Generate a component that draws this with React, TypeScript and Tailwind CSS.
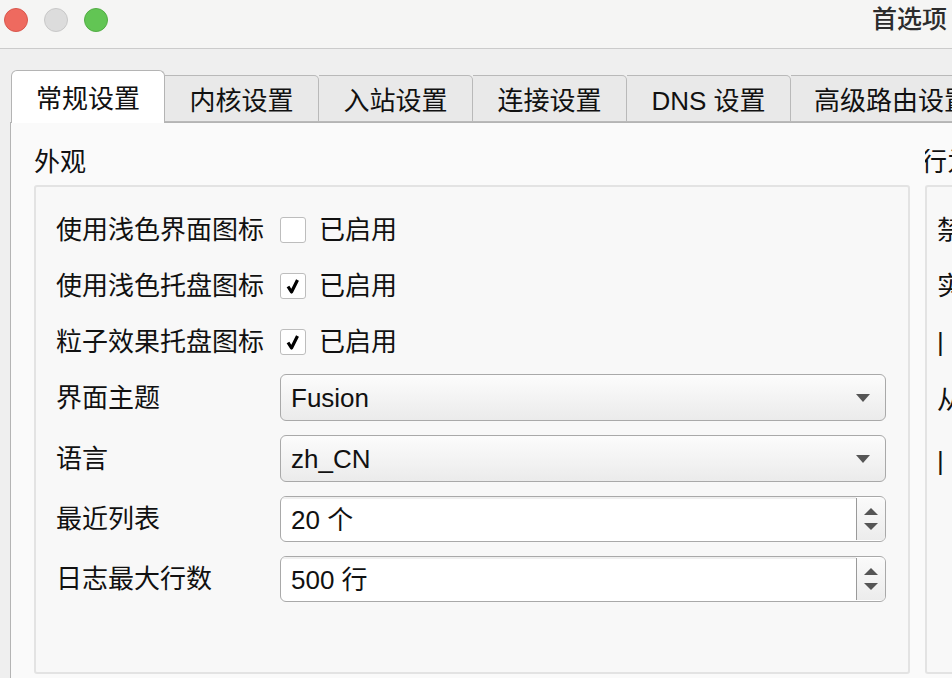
import React from "react";

const FONT = '"Liberation Sans", "Noto Sans CJK SC", sans-serif';

const tabs = ["常规设置", "内核设置", "入站设置", "连接设置", "DNS 设置", "高级路由设置"];

function Checkbox({ checked }: { checked: boolean }) {
  return (
    <div className="w-[26px] h-[26px] border border-[#bdbdbd] rounded-[3px] bg-white flex items-center justify-center">
      {checked && (
        <svg width="18" height="18" viewBox="0 0 18 18">
          <path d="M4 9.5 L7.5 15 L13.5 3" fill="none" stroke="#000" strokeWidth="3.2" strokeLinejoin="round" />
        </svg>
      )}
    </div>
  );
}

function Combo({ value }: { value: string }) {
  return (
    <div className="h-[47px] flex-1 flex items-center justify-between pl-[10px] pr-[14px] rounded-[6px] border border-[#a9a9a9] bg-gradient-to-b from-[#fcfcfc] to-[#ebebeb]">
      <span>{value}</span>
      <svg width="16" height="10" viewBox="0 0 16 10">
        <path d="M1 1 L15 1 L8 9 Z" fill="#555" />
      </svg>
    </div>
  );
}

function Spin({ value }: { value: string }) {
  return (
    <div className="h-[46px] flex-1 flex rounded-[6px] border border-[#a9a9a9] bg-white overflow-hidden">
      <div className="flex-1 flex items-center pl-[10px] border-t-2 border-[#efefef]">{value}</div>
      <div className="w-[29px] flex flex-col items-center justify-center gap-[6px] border-l border-[#9a9a9a] my-[1px] bg-gradient-to-b from-[#fafafa] to-[#ececec]">
        <svg width="16" height="9" viewBox="0 0 16 9">
          <path d="M1 8 L15 8 L8 1 Z" fill="#555" />
        </svg>
        <svg width="16" height="9" viewBox="0 0 16 9">
          <path d="M1 1 L15 1 L8 8 Z" fill="#555" />
        </svg>
      </div>
    </div>
  );
}

function Row({ label, children }: { label: string; children: React.ReactNode }) {
  return (
    <div className="flex items-center">
      <div className="w-[224px] shrink-0 ml-[-1px]">{label}</div>
      {children}
    </div>
  );
}

export default function App() {
  return (
    <div className="w-[952px] h-[678px] overflow-hidden bg-[#efefef] text-[#111] text-[26px] leading-none" style={{ fontFamily: FONT }}>
      {/* title bar */}
      <div className="h-[49px] bg-[#f5f5f4] border-b border-[#cbcbcb] flex items-start justify-between pl-[4px] pr-[5px] pt-[8px]">
        <div className="flex gap-[16px]">
          <div className="w-[24px] h-[24px] rounded-full bg-[#ee6a5f] border border-[#d9574d]" />
          <div className="w-[24px] h-[24px] rounded-full bg-[#dcdcdc] border border-[#c8c8c8]" />
          <div className="w-[24px] h-[24px] rounded-full bg-[#62c554] border border-[#52ad44]" />
        </div>
        <div className="text-[25px] text-[#2c2c2c] font-medium mt-[-1px]">首选项</div>
      </div>

      {/* tabs */}
      <div className="flex items-end pl-[11px] pt-[21px] h-[73px] relative z-10">
        {tabs.map((t, i) =>
          i === 0 ? (
            <div
              key={t}
              className="w-[154px] h-[53px] shrink-0 bg-white border border-b-0 border-[#b4b4b4] rounded-t-[6px] flex items-center justify-center pt-[4px] mb-[-1px]"
            >
              {t}
            </div>
          ) : (
            <div
              key={t}
              className={`${i === 4 ? "w-[164px]" : "w-[154px]"} h-[47px] shrink-0 bg-[#e9e9e9] border border-l-0 border-[#b9b9b9] rounded-tr-[5px] flex items-center pt-[4px] ${i === 5 ? "pl-[23px] w-[200px]" : "justify-center"}`}
            >
              <span className="whitespace-nowrap">{t}</span>
            </div>
          )
        )}
      </div>

      {/* pane */}
      <div className="ml-[10px] h-[560px] bg-[#fafafa] border-l border-t border-[#b4b4b4] flex gap-[15px] pl-[23px] pt-[26px]">
        <div className="w-[876px] shrink-0 flex flex-col">
          <div className="h-[36px]">外观</div>
          <div className="h-[489px] bg-[#f8f8f8] border-2 border-[#e3e3e3] rounded-[3px] pl-[21px] pr-[22px] pt-[30px] flex flex-col">
            <div className="flex flex-col gap-[30px]">
              <Row label="使用浅色界面图标">
                <Checkbox checked={false} />
                <span className="ml-[13px]">已启用</span>
              </Row>
              <Row label="使用浅色托盘图标">
                <Checkbox checked={true} />
                <span className="ml-[13px]">已启用</span>
              </Row>
              <Row label="粒子效果托盘图标">
                <Checkbox checked={true} />
                <span className="ml-[13px]">已启用</span>
              </Row>
            </div>
            <div className="flex flex-col gap-[14px] mt-[19px]">
              <Row label="界面主题">
                <Combo value="Fusion" />
              </Row>
              <Row label="语言">
                <Combo value="zh_CN" />
              </Row>
              <Row label="最近列表">
                <Spin value="20 个" />
              </Row>
              <Row label="日志最大行数">
                <Spin value="500 行" />
              </Row>
            </div>
          </div>
        </div>
        <div className="flex-1 flex flex-col overflow-hidden">
          <div className="h-[36px] whitespace-nowrap ml-[-4px]">行为</div>
          <div className="h-[489px] bg-[#f8f8f8] border-2 border-r-0 border-[#e3e3e3] rounded-l-[3px] pl-[10px] pt-[30px] flex flex-col gap-[30px] whitespace-nowrap">
            <div>禁止</div>
            <div>实时</div>
            <div>|</div>
            <div className="mt-[2px]">从</div>
            <div className="mt-[5px]">|</div>
          </div>
        </div>
      </div>
    </div>
  );
}
